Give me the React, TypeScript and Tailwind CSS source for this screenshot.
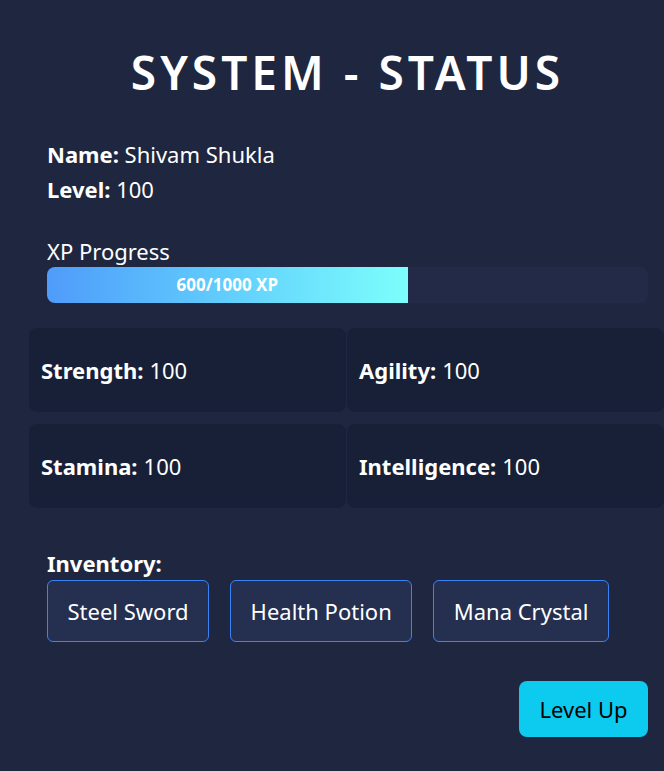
import React from 'react';

const stats = [
  { label: 'Strength', value: 100 },
  { label: 'Agility', value: 100 },
  { label: 'Stamina', value: 100 },
  { label: 'Intelligence', value: 100 },
];

const inventory = ['Steel Sword', 'Health Potion', 'Mana Crystal'];

const App = () => {
  const xp = 600;
  const maxXp = 1000;

  return (
    <div
      className="min-h-screen w-[664px] overflow-hidden bg-[#1f2740] text-white"
      style={{ fontFamily: '"Noto Sans", "Open Sans", sans-serif' }}
    >
      <div className="w-[601px] ml-[47px] pt-[40px] pb-[34px]">
        <h1 className="text-center text-[46px] leading-[64px] tracking-[4px] font-semibold">
          SYSTEM - STATUS
        </h1>

        <div className="mt-[33px] text-[22px] leading-[35px]">
          <p>
            <span className="font-bold">Name:</span> Shivam Shukla
          </p>
          <p>
            <span className="font-bold">Level:</span> 100
          </p>
        </div>

        <div className="mt-[30px]">
          <p className="text-[22px] leading-[28px]">XP Progress</p>
          <div className="mt-[2px] h-[36px] w-full rounded-[8px] bg-[#222a47] overflow-hidden">
            <div
              className="h-full flex items-center justify-center bg-gradient-to-r from-[#4f9bfa] to-[#7cfffb] text-[17px] font-bold"
              style={{ width: `${(xp / maxXp) * 100}%` }}
            >
              {xp}/{maxXp} XP
            </div>
          </div>
        </div>

        <div className="mt-[25px] ml-[-18px] w-[635px] grid grid-cols-2 gap-x-px gap-y-[12px]">
          {stats.map((stat) => (
            <div
              key={stat.label}
              className="h-[84px] rounded-[8px] bg-[#172036] flex items-center px-[12px] text-[22px]"
            >
              <span className="font-bold">{stat.label}:</span>
              <span className="ml-[6px]">{stat.value}</span>
            </div>
          ))}
        </div>

        <div className="mt-[41px]">
          <p className="text-[22px] leading-[28px] font-bold">Inventory:</p>
          <div className="mt-[3px] flex gap-[21px]">
            {inventory.map((item) => (
              <div
                key={item}
                className="h-[62px] px-[19.5px] flex items-center rounded-[6px] border border-[#3b82f6] bg-[#252f50] text-[22px]"
              >
                {item}
              </div>
            ))}
          </div>
        </div>

        <div className="mt-[39px] flex justify-end">
          <button className="h-[56px] w-[129px] rounded-[8px] bg-[#0ccbee] text-black text-[22px]">
            Level Up
          </button>
        </div>
      </div>
    </div>
  );
};

export default App;
